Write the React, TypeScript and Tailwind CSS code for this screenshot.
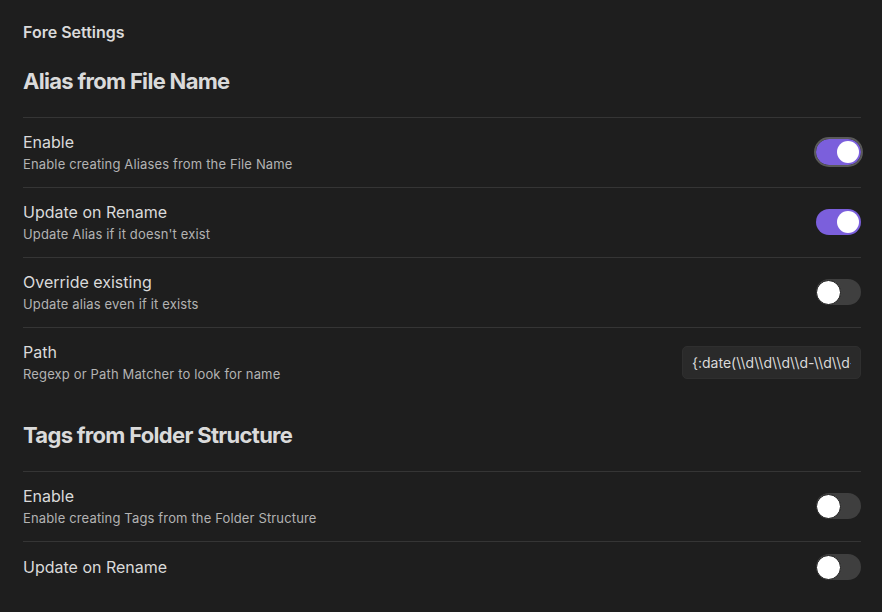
import React, { useState } from 'react';

type Item = {
  name: string;
  desc?: string;
  kind: 'toggle' | 'text';
  value?: boolean;
  text?: string;
  focused?: boolean;
};

const sections: { title: string; items: Item[] }[] = [
  {
    title: 'Alias from File Name',
    items: [
      { name: 'Enable', desc: 'Enable creating Aliases from the File Name', kind: 'toggle', value: true, focused: true },
      { name: 'Update on Rename', desc: "Update Alias if it doesn't exist", kind: 'toggle', value: true },
      { name: 'Override existing', desc: 'Update alias even if it exists', kind: 'toggle', value: false },
      { name: 'Path', desc: 'Regexp or Path Matcher to look for name', kind: 'text', text: '{:date(\\\\d\\\\d\\\\d\\\\d-\\\\d\\\\d-\\\\d\\\\d)}' },
    ],
  },
  {
    title: 'Tags from Folder Structure',
    items: [
      { name: 'Enable', desc: 'Enable creating Tags from the Folder Structure', kind: 'toggle', value: false },
      { name: 'Update on Rename', kind: 'toggle', value: false },
    ],
  },
];

const Toggle: React.FC<{ on: boolean; focused?: boolean; onChange: () => void }> = ({ on, focused, onChange }) => (
  <button
    onClick={onChange}
    className={`relative flex h-[26px] w-[45px] shrink-0 items-center rounded-full p-[2px] ${
      on ? 'justify-end bg-[#7b5fdc]' : 'justify-start bg-[#3f3f3f]'
    } ${focused ? 'outline-2 outline-[#5a5a5a]' : ''}`}
  >
    <span
      className={`block rounded-full bg-white ${on ? 'h-[22px] w-[22px]' : 'h-[25px] w-[25px] -ml-[2px] border border-[#1a1a1a]'}`}
    />
  </button>
);

const App: React.FC = () => {
  const [values, setValues] = useState<Record<string, boolean>>(() => {
    const init: Record<string, boolean> = {};
    sections.forEach((s, si) => s.items.forEach((it, i) => { init[`${si}-${i}`] = !!it.value; }));
    return init;
  });

  return (
    <div
      className="min-h-screen bg-[#1e1e1e] pl-[23px] pr-[21px] pt-[22px] text-[#dadada]"
      style={{ fontFamily: 'Inter, "Noto Sans", sans-serif' }}
    >
      <div className="text-[16px] font-semibold leading-[20px]">Fore Settings</div>

      {sections.map((section, si) => (
        <div key={section.title} className={si === 0 ? 'mt-[25px]' : 'mt-[24px]'}>
          {/* Section heading */}
          <h2 className="mb-[22px] text-[22px] font-bold leading-[28px] tracking-[-0.7px]">{section.title}</h2>

          {section.items.map((item, i) => {
            const key = `${si}-${i}`;
            return (
              <div
                key={key}
                className="flex items-center justify-between border-t border-[#353535] pb-[13px] pt-[12px]"
              >
                <div className="flex flex-col">
                  <div className="text-[16px] leading-[24px]">{item.name}</div>
                  {item.desc && (
                    <div className="text-[13px] leading-[20px] tracking-[0.15px] text-[#b3b3b3]">{item.desc}</div>
                  )}
                </div>
                {item.kind === 'toggle' ? (
                  <Toggle
                    on={values[key]}
                    focused={item.focused}
                    onChange={() => setValues(prev => ({ ...prev, [key]: !prev[key] }))}
                  />
                ) : (
                  <input
                    type="text"
                    defaultValue={item.text}
                    className="h-[33px] w-[179px] rounded-[5px] border border-[#2f2f2f] bg-[#2a2a2a] px-[9px] text-[14px] text-[#dadada] outline-none"
                  />
                )}
              </div>
            );
          })}
        </div>
      ))}
    </div>
  );
};

export default App;
